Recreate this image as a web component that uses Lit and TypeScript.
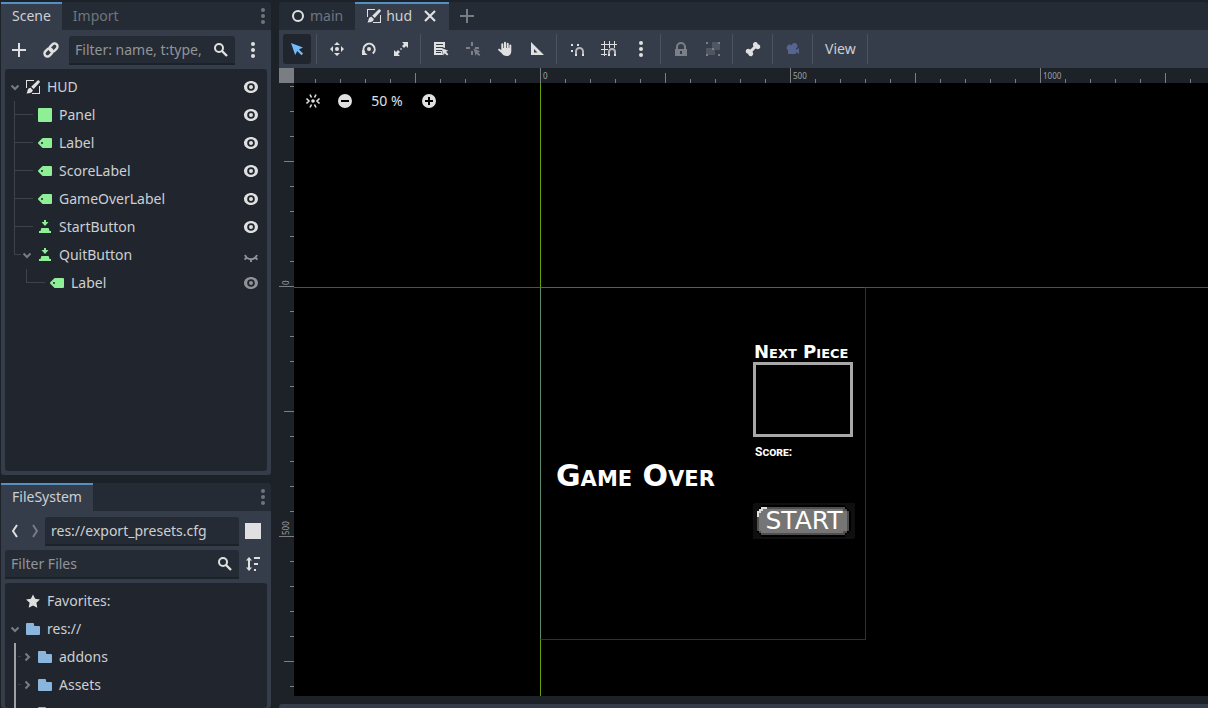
import { LitElement, html, svg, css, nothing } from "lit";
import { customElement, property, state } from "lit/decorators.js";
import { classMap } from "lit/directives/class-map.js";

const ICONS: Record<string, unknown> = {
  add: svg`<path d="M7 1v6H1v2h6v6h2V9h6V7H9V1z"/>`,
  link: svg`<g fill="none" stroke="currentColor" stroke-width="2.400" transform="rotate(-45 8 8)"><rect x="0" y="5" width="8.800" height="6" rx="3"/><rect x="7.200" y="5" width="8.800" height="6" rx="3"/></g>`,
  search: svg`<g fill="none" stroke="currentColor" stroke-width="2"><circle cx="6" cy="6" r="4"/><path d="M9 9l5 5" stroke-width="2.400"/></g>`,
  kebab: svg`<circle cx="8" cy="2" r="2"/><circle cx="8" cy="8" r="2"/><circle cx="8" cy="14" r="2"/>`,
  layer: svg`<path d="M1 1h8v1H2v7H1zM15 7v8H7v-1h7V7z"/><path d="M12.600 1.400c.9-.8 2.700.6 2.200 1.900L8.700 10 6.200 7.800zM5.400 8.800l2.400 2.200c-.2 2-1.800 3.500-6.300 3.400.7-.8.7-1.800 1.100-3.200.4-1.400 1.500-2.400 2.800-2.400z"/>`,
  eye: svg`<path fill-rule="evenodd" d="M8 2C5 2 1 4 1 8s4 6 7 6 7-2 7-6-4-6-7-6zm0 2.200a3.800 3.800 0 0 1 0 7.600 3.800 3.800 0 0 1 0-7.600zm0 1.800a2 2 0 0 0 0 4 2 2 0 0 0 0-4z"/>`,
  eyeClosed: svg`<path d="M2 8c1.200 3 3.400 4.200 6 4.200s4.800-1.200 6-4.200M8 12v3M3.800 10.500L1.600 12.600M12.200 10.500l2.200 2.100" fill="none" stroke="currentColor" stroke-width="2"/>`,
  panel: svg`<rect x="1" y="1" width="14" height="14" rx="1"/>`,
  label: svg`<path d="M6 3a1 1 0 0 0-.707.293l-4 4a1 1 0 0 0 0 1.414l4 4A1 1 0 0 0 6 13h8a1 1 0 0 0 1-1V4a1 1 0 0 0-1-1zM5 7a1 1 0 0 1 0 2 1 1 0 0 1 0-2z"/>`,
  button: svg`<path d="M7 1v2H4.500L8 7l3.500-4H9V1zM5 9a1 1 0 0 0-1 1l-.5 2H2v2h12v-2h-1.500l-.5-2a1 1 0 0 0-1-1z"/>`,
  folder: svg`<path d="M2 2a1 1 0 0 0-1 1v10a1 1 0 0 0 1 1h12a1 1 0 0 0 1-1V6a1 1 0 0 0-1-1h-4a1 1 0 0 1-1-1V3a1 1 0 0 0-1-1z"/>`,
  star: svg`<path d="M8 1.400l2.100 4.300 4.800.7-3.500 3.400.9 4.900L8 12.400l-4.300 2.300.9-4.900L1.100 6.400l4.800-.7z"/>`,
  back: svg`<path d="M10 2L6 8l4 6" fill="none" stroke="currentColor" stroke-width="2"/>`,
  forward: svg`<path d="M6 2l4 6-4 6" fill="none" stroke="currentColor" stroke-width="2"/>`,
  square: svg`<path d="M0 0h16v16H0z"/>`,
  sort: svg`<path d="M4 1l3 3.500H5v7h2L4 15l-3-3.500h2v-7H1zM9 1h6v2H9zM9 7h4v2H9zM9 13h2v2H9z"/>`,
  circle: svg`<circle cx="8" cy="8" r="5" fill="none" stroke="currentColor" stroke-width="2"/>`,
  close: svg`<path d="M3 3l10 10M13 3L3 13" stroke="currentColor" stroke-width="2.200"/>`,
  select: svg`<path d="M2 2l4.200 12 2-4 4.300 4.200 1.600-1.600L9.900 8.400l4.100-2z"/>`,
  move: svg`<path d="M8 1l3 3H5zM8 15l3-3H5zM1 8l3-3v6zM15 8l-3-3v6z"/><circle cx="8" cy="8" r="2"/>`,
  rotate: svg`<path d="M3.500 11.500A5.600 5.600 0 1 1 11.800 12.600" fill="none" stroke="currentColor" stroke-width="2"/><path d="M1 8.500v5.500h5.500z"/><circle cx="8" cy="8" r="2"/>`,
  scale: svg`<path d="M9 1h6v6l-2-2-2 2-2-2 2-2zM7 15H1V9l2 2 2-2 2 2-2 2zM7.300 7.300h1.400v1.400H7.300z"/>`,
  list: svg`<path d="M1 1h11v6l-2-.8V6H3v1h6v2H3v1h6l1 4H1zM3 3v1h7V3zM3 11v1h5v-1z" fill-rule="evenodd"/><path d="M8.500 7l6.800 2.800-2.300 1 2.400 2.500-1.300 1.300-2.500-2.400-.9 2.400z"/>`,
  pivot: svg`<path d="M6 1h2v4H6zM1 6h4v2H1zM10 6h4v2h-4zM6 10h2v4H6z"/><path d="M8.500 7.500l6.800 2.800-2.300 1 2.400 2.500-1.300 1.300-2.500-2.400-.9 2.400z"/>`,
  hand: svg`<path d="M7 1.800a1 1 0 0 1 2 0V7h.7V2.700a1 1 0 0 1 2 0V7h.6V4.500a1 1 0 0 1 2 0V10c0 3-1.700 5-4.500 5-2.600 0-4-1-5.300-3L1.300 9.200C.7 8 2 7.200 2.900 8l1.400 1.300V3.300a1 1 0 0 1 2 0V7H7z"/>`,
  ruler: svg`<path d="M2 1v13h13zM5 8l3.500 3.500H5z" fill-rule="evenodd"/>`,
  smartSnap: svg`<path d="M2 3h2v2H2zM8 3h2v2H8zM2 9h2v2H2z"/><path d="M7 15v-4.500a3.500 3.500 0 0 1 7 0V15" fill="none" stroke="currentColor" stroke-width="2" opacity=".75"/><path d="M6 13h2v2H6zM13 13h2v2h-2z"/>`,
  gridSnap: svg`<path d="M3 0h1v3h4V0h1v3h4V0h1v3h2v1h-2v3h-1V4H9v3H8V4H4v4h3v1H4v4h2v1H4v1H3v-1H0v-1h3V9H0V8h3V4H0V3h3z"/><path d="M8 15v-4a3 3 0 0 1 6 0v4" fill="none" stroke="currentColor" stroke-width="2" opacity=".75"/><path d="M7 13h2v2H7zM13 13h2v2h-2z"/>`,
  lock: svg`<path d="M8 1a5 5 0 0 0-5 5v2H2v7h12V8h-1V6a5 5 0 0 0-5-5zm0 2a3 3 0 0 1 3 3v2H5V6a3 3 0 0 1 3-3zM7 10h2v3H7z" fill-rule="evenodd"/>`,
  group: svg`<g opacity=".4"><path d="M7 1h8v8h-5v5H1V7h6z"/></g><path d="M1 1h2v2H1zM13 1h2v2h-2zM1 13h2v2H1zM13 13h2v2h-2zM7 7h2v2H7z"/>`,
  bone: svg`<path d="M10.500 1A2.500 2.500 0 0 0 8.200 4.600L8.400 5.400 5.400 8.400 4.600 8.200A2.500 2.500 0 1 0 3.200 12.800 2.500 2.500 0 1 0 7.800 11.400L7.600 10.600 10.600 7.600 11.400 7.800A2.500 2.500 0 1 0 12.800 3.200 2.500 2.500 0 0 0 10.500 1z"/>`,
  camera: svg`<path d="M9.500 2a3 3 0 0 0-2.900 2.200A2.800 2.800 0 1 0 3 9.200V12a1 1 0 0 0 1 1h6a1 1 0 0 0 1-1v-1l3 2V7l-3 2V7.600A3 3 0 0 0 9.500 2z"/>`,
  center: svg`<circle cx="8" cy="8" r="1.800"/><path d="M5 1.500L6.500 4.500M11 1.500L9.500 4.500M5 14.500l1.500-3M11 14.500l-1.500-3M1.500 5.500L4 8 1.500 10.500M14.500 5.500L12 8l2.500 2.500" fill="none" stroke="currentColor" stroke-width="1.600"/>`,
  minus: svg`<path d="M8 1a7 7 0 0 0 0 14A7 7 0 0 0 8 1zM4 7h8v2H4z" fill-rule="evenodd"/>`,
  plus: svg`<path d="M8 1a7 7 0 0 0 0 14A7 7 0 0 0 8 1zM7 4h2v3h3v2H9v3H7V9H4V7h3z" fill-rule="evenodd"/>`,
};

const icon = (name: string) =>
  html`<svg class="icon" viewBox="0 0 16 16" width="16" height="16" fill="currentColor" aria-hidden="true">${ICONS[name]}</svg>`;

const shared = css`
  * { box-sizing: border-box; }
  button, input {
    font: inherit; color: inherit; background: none; border: 0; margin: 0; padding: 0; outline: none;
  }
  button { display: flex; align-items: center; justify-content: center; flex: none; white-space: nowrap; }
  .icon { display: block; flex: none; }
  .tabs { display: flex; height: 28px; flex: none; background: #252b34; border-radius: 3px 3px 0 0; }
  .tab { height: 28px; padding: 0 11px 2px; color: #70757d; border-top: 2px solid transparent; gap: 4px; }
  .tab.active { background: #363d4a; color: #cdcfd2; border-top-color: #5590c3; }
  .tool { width: 28px; height: 28px; border-radius: 3px; color: #e0e0e0; }
`;

interface TreeItem {
  name: string;
  icon: string;
  depth: number;
  tint?: string;
  fold?: "open" | "closed";
  last?: boolean;
  eye?: "on" | "off" | "faded";
}

@customElement("item-tree")
class ItemTree extends LitElement {
  @property({ attribute: false }) items: TreeItem[] = [];
  @property({ type: Boolean }) folders = false;

  static styles = [
    shared,
    css`
      :host { display: block; background: #21262e; border-radius: 3px; overflow: hidden; flex: 1; min-height: 0; }
      ul { list-style: none; margin: 0; padding: 4px 8px 0 4px; }
      li { display: flex; align-items: center; height: 28px; }
      .indent { width: 12px; flex: none; }
      .fold { width: 12px; height: 28px; margin-right: 4px; color: #787c84; }
      .gap { width: 16px; flex: none; }
      .short { width: 4px; flex: none; }
      .guide { flex: none; display: block; }
      .name { margin-left: 6px; flex: 1; }
      .green { color: #8eef97; }
      .blue { color: #8ab6de; }
      .white { color: #e0e0e0; }
      .eye { width: 16px; height: 28px; color: #e0e0e0; }
      .eye.faded { color: #8f9297; }
    `,
  ];

  private guide(item: TreeItem) {
    const width = item.fold ? 12 : 24;
    if (this.folders) {
      return html`<svg class="guide" width="12" height="28" aria-hidden="true">
        <path d="M5 0h2v28H5z" fill="#a0a1a4"/><path d="M9 13h3v1H9z" fill="#3b4048"/>
      </svg>`;
    }
    return html`<svg class="guide" width=${width} height="28" aria-hidden="true">
      <path d="M5.5 0V${item.last ? 14 : 28}M5 13.500H${width}" fill="none" stroke="#3e434b"/>
    </svg>`;
  }

  private row(item: TreeItem) {
    const open = item.fold === "open";
    return html`<li>
      ${item.depth > 1 ? html`<span class="indent"></span>` : nothing}
      ${item.depth > 0 ? this.guide(item) : nothing}
      ${item.fold
        ? html`<button class="fold" aria-label="Toggle ${item.name}" aria-expanded=${open}>
            <svg width="12" height="12" fill="none" stroke="currentColor" stroke-width="2">
              <path d=${open ? "M2.500 4.500L6 8l3.500-3.500" : "M4.500 2.500L8 6l-3.500 3.500"} />
            </svg>
          </button>`
        : html`<span class=${item.depth > 0 ? "short" : "gap"}></span>`}
      <span class=${item.tint ?? "white"}>${icon(item.icon)}</span>
      <span class="name">${item.name}</span>
      ${item.eye
        ? html`<button class=${classMap({ eye: true, faded: item.eye !== "on" })} aria-label="Visibility of ${item.name}">
            ${icon(item.eye === "off" ? "eyeClosed" : "eye")}
          </button>`
        : nothing}
    </li>`;
  }

  render() {
    return html`<ul>${this.items.map((item) => this.row(item))}</ul>`;
  }
}

@customElement("canvas-view")
class CanvasView extends LitElement {
  @state() private extent = { width: 0, height: 0 };

  private observer = new ResizeObserver(() => this.measure());

  private measure() {
    this.extent = { width: this.clientWidth - 15, height: this.clientHeight - 15 };
  }

  connectedCallback() {
    super.connectedCallback();
    this.observer.observe(this);
  }

  disconnectedCallback() {
    super.disconnectedCallback();
    this.observer.disconnect();
  }

  static styles = [
    shared,
    css`
      :host {
        display: grid; grid-template: 15px minmax(0, 1fr) / 15px minmax(0, 1fr);
        flex: 1; min-height: 0; background: #1d2229;
      }
      .corner { background: #7a7d82; }
      .ruler { width: 100%; height: 100%; display: block; overflow: hidden; fill: #7a7d82; font-size: 8px; }
      .ruler text { fill: #a0a2a5; }
      .stage { position: relative; overflow: hidden; background: #000; color: #fff; }
      .axis-x { position: absolute; left: 0; right: 0; top: 204px; height: 1px; background: #a3293d; }
      .axis-y { position: absolute; top: 0; bottom: 0; left: 246px; width: 1px; background: #65a004; }
      .screen {
        position: absolute; left: 246px; top: 204px; width: 326px; height: 353px;
        border: 1px solid #2a2a62; border-top-color: #893d82; border-left-color: #5f8b67;
      }
      .zoom { position: absolute; left: 5px; top: 4px; display: flex; align-items: center; gap: 4px; }
      .level { width: 48px; color: #e0e0e0; }
      .pixel { position: absolute; white-space: nowrap; font-family: "DejaVu Sans", sans-serif; font-weight: 700; font-variant-caps: small-caps; line-height: 20px; }
      .next { left: 213px; top: 54px; font-size: 18px; }
      .preview { position: absolute; left: 212px; top: 74px; width: 100px; height: 75px; border: 3px solid #a8a8a8; }
      .score { left: 214px; top: 154px; font-family: Roboto, sans-serif; font-size: 12px; }
      .over { left: 15px; top: 173px; font-size: 30px; line-height: 30px; }
      .start { position: absolute; left: 212px; top: 215px; width: 102px; height: 36px; font-family: "DejaVu Sans", sans-serif; font-size: 25px; line-height: 36px; }
      .start svg { position: absolute; inset: 0; }
      .start span { position: relative; }
    `,
  ];

  /* One tick every 25px; a longer one every fifth, a numbered one every tenth. */
  private ticks(origin: number, length: number, vertical: boolean) {
    const out = [];
    for (let i = -Math.floor(origin / 25); origin + i * 25 < length; i++) {
      const at = origin + i * 25;
      const size = i % 10 === 0 ? 15 : i % 5 === 0 ? 10 : 4;
      out.push(
        vertical
          ? svg`<rect x=${15 - size} y=${at} width=${size} height="1"/>`
          : svg`<rect x=${at} y=${15 - size} width="1" height=${size}/>`,
      );
      if (i % 10 === 0) {
        out.push(
          vertical
            ? svg`<text transform="translate(10 ${at - 1}) rotate(-90)">${i * 50}</text>`
            : svg`<text x=${at + 3} y="11">${i * 50}</text>`,
        );
      }
    }
    return out;
  }

  render() {
    return html`
      <div class="corner"></div>
      <svg class="ruler" aria-hidden="true">${this.ticks(246, this.extent.width, false)}</svg>
      <svg class="ruler" aria-hidden="true">${this.ticks(203, this.extent.height, true)}</svg>
      <div class="stage">
        <div class="axis-x"></div>
        <div class="axis-y"></div>
        <div class="screen">
          <div class="pixel next">Next Piece</div>
          <div class="preview"></div>
          <div class="pixel score">Score:</div>
          <div class="pixel over">Game Over</div>
          <button class="start">
            <svg width="102" height="36" shape-rendering="crispEdges" aria-hidden="true">
              <rect width="102" height="36" rx="2" fill="#0f0f0f"/>
              <path d="M8 2h84v2h2v2h2v2h2v20h-2v2h-2v2h-2v2H8v-2H6v-2H4V8h2V4h2z" fill="#000"/>
              <path d="M8 4h84v2h2v2h2v20h-2v2h-2v2H8v-2H6v-2H4V8h2V6h2z" fill="#4f4f4f"/>
              <path d="M8 6h82v2h4v20h-4v2H8v-2H6V8h2z" fill="#757575"/>
              <path d="M8 4h6v2h-4v2H8v2H6v4H4V8h2V6h2z" fill="#dedede"/>
            </svg>
            <span>START</span>
          </button>
        </div>
        <div class="zoom">
          <button class="tool" aria-label="Center view">${icon("center")}</button>
          <button class="tool" aria-label="Zoom out">${icon("minus")}</button>
          <button class="level">50 %</button>
          <button class="tool" aria-label="Zoom in">${icon("plus")}</button>
        </div>
      </div>
    `;
  }
}

const TOOLS: [string, string, string?][][] = [
  [["select", "Select", "on"]],
  [["move", "Move"], ["rotate", "Rotate"], ["scale", "Scale"]],
  [["list", "List nodes"], ["pivot", "Pivot", "dim"], ["hand", "Pan"], ["ruler", "Ruler"]],
  [["smartSnap", "Smart snap"], ["gridSnap", "Grid snap"], ["kebab", "Snap options"]],
  [["lock", "Lock", "dim"], ["group", "Group", "dim"]],
  [["bone", "Skeleton"]],
  [["camera", "Override camera", "off"]],
];

@customElement("app-root")
class AppRoot extends LitElement {
  private scene: TreeItem[] = [
    { name: "HUD", icon: "layer", depth: 0, fold: "open", eye: "on" },
    { name: "Panel", icon: "panel", tint: "green", depth: 1, eye: "on" },
    { name: "Label", icon: "label", tint: "green", depth: 1, eye: "on" },
    { name: "ScoreLabel", icon: "label", tint: "green", depth: 1, eye: "on" },
    { name: "GameOverLabel", icon: "label", tint: "green", depth: 1, eye: "on" },
    { name: "StartButton", icon: "button", tint: "green", depth: 1, eye: "on" },
    { name: "QuitButton", icon: "button", tint: "green", depth: 1, fold: "open", last: true, eye: "off" },
    { name: "Label", icon: "label", tint: "green", depth: 2, last: true, eye: "faded" },
  ];

  private files: TreeItem[] = [
    { name: "Favorites:", icon: "star", depth: 0 },
    { name: "res://", icon: "folder", tint: "blue", depth: 0, fold: "open" },
    { name: "addons", icon: "folder", tint: "blue", depth: 1, fold: "closed" },
    { name: "Assets", icon: "folder", tint: "blue", depth: 1, fold: "closed" },
    { name: "", icon: "folder", tint: "blue", depth: 1, fold: "closed" },
  ];

  static styles = [
    shared,
    css`
      :host {
        display: flex; gap: 8px; height: 100vh; padding: 2px 0 0 1px; box-sizing: border-box; overflow: hidden;
        background: #1d2229; color: #cdcfd2; font: 14px/20px "Noto Sans", sans-serif;
      }
      .docks { display: flex; flex-direction: column; gap: 8px; width: 270px; flex: none; }
      .dock { display: flex; flex-direction: column; min-height: 0; }
      .dock.scene { flex: 1; }
      .dock.files { flex: 0 0 225px; }
      .body { display: flex; flex-direction: column; gap: 4px; flex: 1; min-height: 0; padding: 6px 4px 4px; background: #363d4a; border-radius: 0 0 3px 3px; }
      .files .body { padding-bottom: 0; }
      .row { display: flex; align-items: flex-start; flex: none; }
      .row.spaced { gap: 4px; }
      .menu { margin-left: auto; width: 16px; color: #70757d; }
      .field { display: flex; align-items: center; flex: 1; min-width: 0; height: 29px; background: #252b34; border-bottom: 2px solid #1d2229; border-radius: 3px 3px 0 0; padding: 0 6px; gap: 8px; color: #e0e0e0; }
      .field input { flex: 1; min-width: 0; width: 0; height: 20px; color: #cdcfd2; }
      .field input::placeholder { color: #929599; opacity: 1; }
      .nav { width: 20px; height: 28px; color: #e0e0e0; }
      .nav.dim { color: #787c84; }
      .editor { display: flex; flex-direction: column; flex: 1; min-width: 0; }
      .editor .tabs .icon { color: #e0e0e0; }
      .editor .tab:not(.active) { padding-right: 12px; }
      .tab .close { margin-left: 6px; }
      .editor .tabs .new { width: 36px; height: 28px; }
      .editor .tabs .new .icon { color: #787c84; }
      .toolbar { display: flex; align-items: center; gap: 4px; height: 38px; flex: none; padding: 0 4px; background: #363d4a; }
      .sep { width: 4px; height: 30px; flex: none; display: flex; }
      .sep::before { content: ""; width: 1px; margin-left: 1px; background: #4c525e; }
      .tool.on { background: #21262e; color: #70bafa; height: 30px; }
      .tool.dim { color: #7b7f87; }
      .tool.off { color: #566590; }
      .view { height: 28px; padding: 0 6px; }
      .bottom { height: 4px; flex: none; margin-top: 8px; background: #363d4a; border-radius: 3px 0 0 0; }
    `,
  ];

  render() {
    return html`
      <aside class="docks">
        <section class="dock scene">
          <div class="tabs" role="tablist">
            <button class="tab active" role="tab" aria-selected="true">Scene</button>
            <button class="tab" role="tab" aria-selected="false">Import</button>
            <button class="menu" aria-label="Dock options">${icon("kebab")}</button>
          </div>
          <div class="body">
            <div class="row spaced">
              <button class="tool" aria-label="Add node">${icon("add")}</button>
              <button class="tool" aria-label="Link scene">${icon("link")}</button>
              <label class="field">
                <input type="text" aria-label="Filter nodes" placeholder="Filter: name, t:type, g:group" />
                ${icon("search")}
              </label>
              <button class="tool" aria-label="Scene options">${icon("kebab")}</button>
            </div>
            <item-tree .items=${this.scene}></item-tree>
          </div>
        </section>
        <section class="dock files">
          <div class="tabs" role="tablist">
            <button class="tab active" role="tab" aria-selected="true">FileSystem</button>
            <button class="menu" aria-label="Dock options">${icon("kebab")}</button>
          </div>
          <div class="body">
            <div class="row">
              <button class="nav" aria-label="Back">${icon("back")}</button>
              <button class="nav dim" aria-label="Forward">${icon("forward")}</button>
              <label class="field"><input type="text" aria-label="Path" .value=${"res://export_presets.cfg"} /></label>
              <button class="tool" aria-label="Split mode">${icon("square")}</button>
            </div>
            <div class="row">
              <label class="field">
                <input type="text" aria-label="Filter files" placeholder="Filter Files" />
                ${icon("search")}
              </label>
              <button class="tool" aria-label="Sort files">${icon("sort")}</button>
            </div>
            <item-tree folders .items=${this.files}></item-tree>
          </div>
        </section>
      </aside>
      <main class="editor">
        <div class="tabs" role="tablist">
          <button class="tab" role="tab" aria-selected="false">${icon("circle")}main</button>
          <button class="tab active" role="tab" aria-selected="true">
            ${icon("layer")}hud<span class="close">${icon("close")}</span>
          </button>
          <button class="new" aria-label="New scene">${icon("add")}</button>
        </div>
        <div class="toolbar" role="toolbar">
          ${TOOLS.map(
            (group) => html`${group.map(
              ([name, label, mode]) =>
                html`<button class="tool ${mode ?? ""}" aria-label=${label}>${icon(name)}</button>`,
            )}<span class="sep"></span>`,
          )}
          <button class="view">View</button>
          <span class="sep"></span>
        </div>
        <canvas-view></canvas-view>
        <div class="bottom"></div>
      </main>
    `;
  }
}
